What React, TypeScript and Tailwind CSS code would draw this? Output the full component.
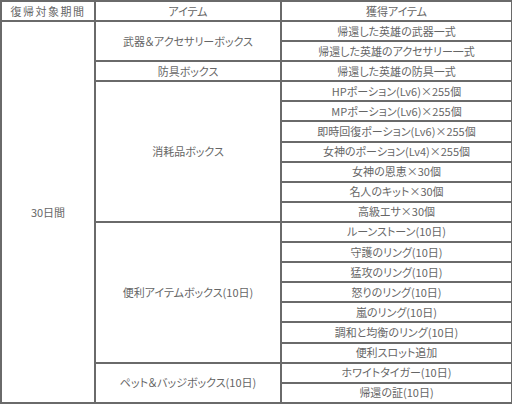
const boxes = [
  {
    name: "武器＆アクセサリーボックス",
    items: ["帰還した英雄の武器一式", "帰還した英雄のアクセサリー一式"],
  },
  { name: "防具ボックス", items: ["帰還した英雄の防具一式"] },
  {
    name: "消耗品ボックス",
    items: [
      "HPポーション(Lv6)×255個",
      "MPポーション(Lv6)×255個",
      "即時回復ポーション(Lv6)×255個",
      "女神のポーション(Lv4)×255個",
      "女神の恩恵×30個",
      "名人のキット×30個",
      "高級エサ×30個",
    ],
  },
  {
    name: "便利アイテムボックス(10日)",
    items: [
      "ルーンストーン(10日)",
      "守護のリング(10日)",
      "猛攻のリング(10日)",
      "怒りのリング(10日)",
      "嵐のリング(10日)",
      "調和と均衡のリング(10日)",
      "便利スロット追加",
    ],
  },
  {
    name: "ペット＆バッジボックス(10日)",
    items: ["ホワイトタイガー(10日)", "帰還の証(10日)"],
  },
];

const total = boxes.reduce((n, b) => n + b.items.length, 0);

const cell = "border-2 border-[#6a6a6a] text-center align-middle p-0 leading-none";

export default function App() {
  return (
    <div className="w-[512px] h-[405px] bg-white overflow-hidden">
      <table
        className="table-fixed border-collapse w-[511px] h-[404px] text-[11px] text-[#666] [font-feature-settings:'palt']"
        style={{ fontFamily: '"Noto Sans CJK JP", "Noto Sans", sans-serif' }}
      >
        <colgroup>
          <col className="w-[94px]" />
          <col className="w-[186px]" />
          <col className="w-[231px]" />
        </colgroup>
        <thead>
          <tr className="h-[20px]">
            <th className={`${cell} font-normal tracking-[1.5px]`}>復帰対象期間</th>
            <th className={`${cell} font-normal`}>アイテム</th>
            <th className={`${cell} font-normal`}>獲得アイテム</th>
          </tr>
        </thead>
        <tbody>
          {boxes.map((box, bi) =>
            box.items.map((item, ii) => (
              <tr key={`${bi}-${ii}`} className="h-[20px]">
                {bi === 0 && ii === 0 && (
                  <td rowSpan={total} className={cell}>
                    30日間
                  </td>
                )}
                {ii === 0 && (
                  <td rowSpan={box.items.length} className={cell}>
                    {box.name}
                  </td>
                )}
                <td className={cell}>{item}</td>
              </tr>
            ))
          )}
        </tbody>
      </table>
    </div>
  );
}
